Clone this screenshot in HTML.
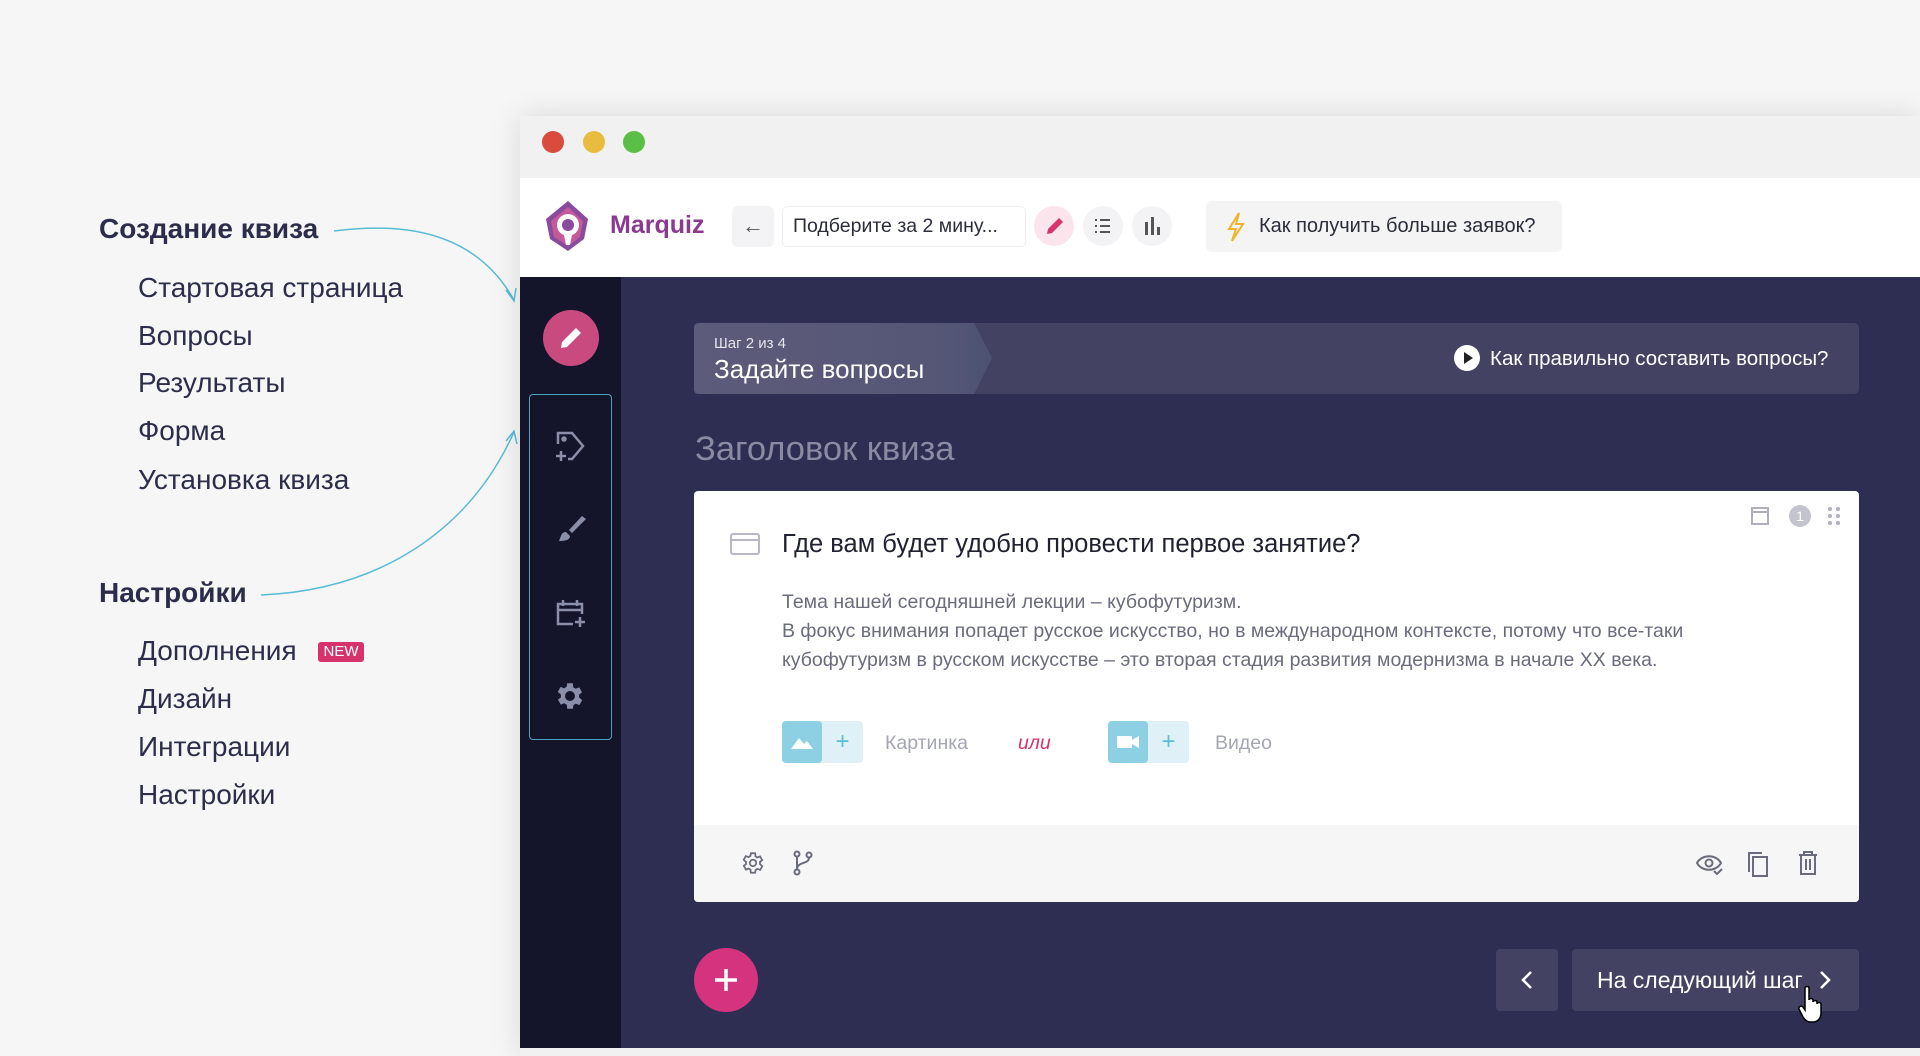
<!DOCTYPE html>
<html><head><meta charset="utf-8"><style>
*{margin:0;padding:0;box-sizing:border-box}
body{width:1920px;height:1048px;background:#f6f6f6;font-family:"Liberation Sans",sans-serif;position:relative;overflow:hidden}
.a{position:absolute}
.lt{font-size:28px;color:#2b2d4a;position:absolute;left:138px;line-height:1}
.lh{font-size:28px;font-weight:bold;color:#2b2d4a;position:absolute;left:99px;line-height:1}
</style></head><body>
<div class="lh" style="top:215px">Создание квиза</div>
<div class="lt" style="top:274px">Стартовая страница</div>
<div class="lt" style="top:322px">Вопросы</div>
<div class="lt" style="top:369px">Результаты</div>
<div class="lt" style="top:417px">Форма</div>
<div class="lt" style="top:466px">Установка квиза</div>
<div class="lh" style="top:579px">Настройки</div>
<div class="lt" style="top:637px">Дополнения</div>
<div class="a" style="left:318px;top:642px;width:46px;height:20px;background:#d6336c;border-radius:3px;color:#fff;font-size:15px;line-height:20px;text-align:center">NEW</div>
<div class="lt" style="top:685px">Дизайн</div>
<div class="lt" style="top:733px">Интеграции</div>
<div class="lt" style="top:781px">Настройки</div>
<svg class="a" style="left:0;top:0" width="520" height="700"><g fill="none" stroke="#5bbcd6" stroke-width="1.5"><path d="M334 231 C420 220 480 240 514 300"/><path d="M506 290 L514 301 L516 288"/><path d="M261 595 C380 590 470 530 514 432"/><path d="M506 441 L514 431 L517 444"/></g></svg>

<div class="a" style="left:520px;top:116px;width:1400px;height:940px;background:#f1f1f1;box-shadow:0 0 30px rgba(0,0,0,.12)"></div>
<div class="a" style="left:542px;top:131px;width:22px;height:22px;border-radius:50%;background:#d94b3d"></div>
<div class="a" style="left:583px;top:131px;width:22px;height:22px;border-radius:50%;background:#e9bc40"></div>
<div class="a" style="left:623px;top:131px;width:22px;height:22px;border-radius:50%;background:#5cbf45"></div>
<div class="a" style="left:520px;top:178px;width:1400px;height:99px;background:#fff"></div>
<svg class="a" style="left:542px;top:199px" width="52" height="54" viewBox="0 0 52 54"><path d="M26 2 L46 20 L42 40 L26 52 L8 40 L4 20Z" fill="#8a4a9e"/><path d="M26 8 L41 22 L38 38 L26 47 L12 38 L9 22Z" fill="#c45a9a"/><circle cx="26" cy="26" r="11" fill="#fff"/><circle cx="26" cy="26" r="6" fill="#8a4a9e"/><path d="M22 36 L30 36 L28 46 L24 46Z" fill="#fff"/></svg>
<div class="a" style="left:610px;top:211px;font-size:25px;font-weight:bold;color:#8c3a8f">Marquiz</div>
<div class="a" style="left:732px;top:206px;width:42px;height:41px;background:#f3f3f5;border-radius:6px;color:#555;font-size:22px;text-align:center;line-height:40px">←</div>
<div class="a" style="left:782px;top:206px;width:244px;height:41px;border:1px solid #eee;border-radius:5px;font-size:19.5px;color:#2b2d3a;line-height:39px;padding-left:10px">Подберите за 2 мину...</div>
<div class="a" style="left:1034px;top:206px;width:40px;height:40px;border-radius:50%;background:#fbe4ec"><svg width="40" height="40"><path d="M13 28 L14 23 L25 12 L29 16 L18 27Z" fill="#d6336c"/></svg></div>
<div class="a" style="left:1083px;top:206px;width:40px;height:40px;border-radius:50%;background:#f3f3f5"><svg width="40" height="40" stroke="#555" stroke-width="2"><path d="M17 14h10M17 20h10M17 26h10M12 14h2M12 20h2M12 26h2"/></svg></div>
<div class="a" style="left:1132px;top:206px;width:40px;height:40px;border-radius:50%;background:#f3f3f5"><svg width="40" height="40" fill="#555"><rect x="13" y="16" width="3" height="13"/><rect x="19" y="11" width="3" height="18"/><rect x="25" y="21" width="3" height="8"/></svg></div>
<div class="a" style="left:1206px;top:201px;width:356px;height:51px;background:#f4f4f5;border-radius:6px"></div>
<svg class="a" style="left:1226px;top:212px" width="20" height="30"><path d="M13 1 L3 17 L10 17 L6 29 L17 12 L10 12Z" fill="none" stroke="#f0b429" stroke-width="2"/></svg>
<div class="a" style="left:1259px;top:215px;font-size:20px;color:#2b2d3a">Как получить больше заявок?</div>

<div class="a" style="left:520px;top:277px;width:1400px;height:771px;background:#2e2d52"></div>
<div class="a" style="left:520px;top:277px;width:101px;height:771px;background:#14152a"></div>
<div class="a" style="left:543px;top:310px;width:56px;height:56px;border-radius:50%;background:#c94a7f"><svg width="56" height="56"><path d="M18 38 L19 32 L33 18 L38 23 L24 37Z" fill="#fff"/></svg></div>
<div class="a" style="left:529px;top:394px;width:83px;height:346px;border:1.5px solid #4aa3c0;border-radius:4px"></div>
<svg class="a" style="left:553px;top:429px" width="36" height="36" fill="none" stroke="#8a8ea8" stroke-width="2.5"><path d="M5 15 V4 H19 L30 17 L19 30 H15"/><path d="M8 22v10M3 27h10"/><circle cx="11" cy="10" r="1.5"/></svg>
<svg class="a" style="left:553px;top:513px" width="36" height="36" fill="#8a8ea8"><path d="M29 3 L33 6 L19 20 L16 17Z"/><path d="M13 19 C8 19 8 24 6 28 C12 28 17 27 17 23Z"/></svg>
<svg class="a" style="left:553px;top:595px" width="36" height="36" fill="none" stroke="#8a8ea8" stroke-width="2.5"><path d="M20 29 H5 V9 H29 V19"/><path d="M5 15h24M10 5v6M24 5v6M27 22v10M22 27h10"/></svg>
<svg class="a" style="left:553px;top:679px" width="34" height="34" viewBox="0 0 24 24" fill="#8a8ea8"><path d="M19.4 13a7.5 7.5 0 000-2l2.1-1.6-2-3.5-2.5 1a7 7 0 00-1.7-1L15 3h-4l-.4 2.6a7 7 0 00-1.7 1l-2.5-1-2 3.5L6.6 11a7.5 7.5 0 000 2l-2.1 1.6 2 3.5 2.5-1a7 7 0 001.7 1L11 21h4l.4-2.6a7 7 0 001.7-1l2.5 1 2-3.5zM13 15.5a3.5 3.5 0 110-7 3.5 3.5 0 010 7z" transform="translate(-1 0)"/></svg>

<div class="a" style="left:694px;top:323px;width:1165px;height:71px;background:#434263;border-radius:5px"></div>
<svg class="a" style="left:694px;top:323px" width="300" height="71"><defs><linearGradient id="g" x1="0" x2="1"><stop offset="0" stop-color="#5d5b7a"/><stop offset=".85" stop-color="#555676"/><stop offset="1" stop-color="#4c5272"/></linearGradient></defs><path d="M5 0 H280 L298 35 L280 71 H5 Q0 71 0 66 V5 Q0 0 5 0Z" fill="url(#g)"/></svg>
<div class="a" style="left:714px;top:335px;font-size:15px;color:#e5e5ee">Шаг 2 из 4</div>
<div class="a" style="left:714px;top:354px;font-size:26px;color:#fff">Задайте вопросы</div>
<div class="a" style="left:1454px;top:345px;width:26px;height:26px;border-radius:50%;background:#fff"><svg width="26" height="26"><path d="M10 7 L19 13 L10 19Z" fill="#222"/></svg></div>
<div class="a" style="left:1490px;top:347px;font-size:20.5px;color:#fff">Как правильно составить вопросы?</div>
<div class="a" style="left:695px;top:430px;font-size:34.5px;color:#8a8aa3">Заголовок квиза</div>

<div class="a" style="left:694px;top:491px;width:1165px;height:411px;background:#fff;border-radius:4px;overflow:hidden"><div class="a" style="left:0;top:334px;width:1165px;height:77px;background:#f6f6f7"></div></div>
<svg class="a" style="left:729px;top:532px" width="32" height="24" fill="none" stroke="#b8b8c4" stroke-width="2"><rect x="2" y="2" width="28" height="20" rx="2"/><path d="M2 8h28"/></svg>
<div class="a" style="left:782px;top:530px;font-size:25.5px;color:#1f2030">Где вам будет удобно провести первое занятие?</div>
<div class="a" style="left:782px;top:588px;font-size:19.5px;color:#6a6b7c;line-height:29px">Тема нашей сегодняшней лекции – кубофутуризм.<br>В фокус внимания попадет русское искусство, но в международном контексте, потому что все-таки<br>кубофутуризм в русском искусстве – это вторая стадия развития модернизма в начале XX века.</div>
<div class="a" style="left:782px;top:721px;width:81px;height:42px;background:#dff0f6;border-radius:4px"><div style="width:40px;height:42px;background:#8dd0e3;border-radius:4px"><svg width="40" height="42"><path d="M9 28 L17 17 L22 23 L25 20 L31 28Z" fill="#fff"/></svg></div><div class="a" style="left:40px;top:0;width:41px;line-height:42px;text-align:center;color:#5bbcd6;font-size:24px">+</div></div>
<div class="a" style="left:885px;top:732px;font-size:19.5px;color:#a5a6b3">Картинка</div>
<div class="a" style="left:1018px;top:732px;font-size:19.5px;color:#d6336c;font-style:italic">или</div>
<div class="a" style="left:1108px;top:721px;width:81px;height:42px;background:#dff0f6;border-radius:4px"><div style="width:40px;height:42px;background:#8dd0e3;border-radius:4px"><svg width="40" height="42"><rect x="9" y="15" width="15" height="12" fill="#fff"/><path d="M24 19 L31 15 V27 L24 23Z" fill="#fff"/></svg></div><div class="a" style="left:40px;top:0;width:41px;line-height:42px;text-align:center;color:#5bbcd6;font-size:24px">+</div></div>
<div class="a" style="left:1215px;top:732px;font-size:19.5px;color:#a5a6b3">Видео</div>
<svg class="a" style="left:1750px;top:506px" width="20" height="20" fill="none" stroke="#b0b0bc" stroke-width="2"><rect x="2" y="2" width="16" height="16"/><path d="M2 6h16"/></svg>
<div class="a" style="left:1789px;top:505px;width:22px;height:22px;border-radius:50%;background:#c4c4ce;color:#fff;font-size:14px;text-align:center;line-height:22px">1</div>
<svg class="a" style="left:1826px;top:506px" width="16" height="20" fill="#b0b0bc"><circle cx="4" cy="3" r="2"/><circle cx="12" cy="3" r="2"/><circle cx="4" cy="10" r="2"/><circle cx="12" cy="10" r="2"/><circle cx="4" cy="17" r="2"/><circle cx="12" cy="17" r="2"/></svg>
<svg class="a" style="left:740px;top:850px" width="26" height="26" viewBox="0 0 24 24" fill="none" stroke="#6a6b7c" stroke-width="1.6"><path d="M19.4 13a7.5 7.5 0 000-2l2.1-1.6-2-3.5-2.5 1a7 7 0 00-1.7-1L15 3h-4l-.4 2.6a7 7 0 00-1.7 1l-2.5-1-2 3.5L6.6 11a7.5 7.5 0 000 2l-2.1 1.6 2 3.5 2.5-1a7 7 0 001.7 1L11 21h4l.4-2.6a7 7 0 001.7-1l2.5 1 2-3.5z" transform="translate(-1 0)"/><circle cx="12" cy="12" r="3"/></svg>
<svg class="a" style="left:790px;top:850px" width="26" height="26" fill="none" stroke="#6a6b7c" stroke-width="2"><circle cx="7" cy="4" r="2.5"/><circle cx="7" cy="22" r="2.5"/><circle cx="19" cy="5" r="2.5"/><path d="M7 7v12M19 8c0 6-12 4-12 11"/></svg>
<svg class="a" style="left:1695px;top:850px" width="28" height="26" fill="none" stroke="#6a6b7c" stroke-width="2"><path d="M2 13 C7 4 21 4 26 13 C21 22 7 22 2 13Z"/><circle cx="14" cy="13" r="3.5"/><path d="M19 21l3 3 5-5"/></svg>
<svg class="a" style="left:1746px;top:850px" width="24" height="28" fill="none" stroke="#6a6b7c" stroke-width="2"><rect x="7" y="7" width="14" height="19"/><path d="M3 22V3h13"/></svg>
<svg class="a" style="left:1796px;top:850px" width="24" height="26" fill="none" stroke="#6a6b7c" stroke-width="2"><path d="M3 5h18M8 5V2h8v3M5 5v19h14V5M10 9v11M14 9v11"/></svg>

<div class="a" style="left:694px;top:948px;width:64px;height:64px;border-radius:50%;background:#d6337f"><svg width="64" height="64" stroke="#fff" stroke-width="3.5"><path d="M32 21v22M21 32h22"/></svg></div>
<div class="a" style="left:1496px;top:949px;width:62px;height:62px;background:#434263;border-radius:4px"><svg width="62" height="62" fill="none" stroke="#fff" stroke-width="2.5"><path d="M35 23 L27 31 L35 39"/></svg></div>
<div class="a" style="left:1572px;top:949px;width:287px;height:62px;background:#434263;border-radius:4px"></div>
<div class="a" style="left:1597px;top:967px;font-size:23px;color:#fff">На следующий шаг</div>
<svg class="a" style="left:1815px;top:965px" width="20" height="30" fill="none" stroke="#fff" stroke-width="2.5"><path d="M6 7 L14 15 L6 23"/></svg>
<svg class="a" style="left:1797px;top:985px" width="30" height="40"><path d="M8 3 C8 1 12 1 12 3 V15 C12 13 16 13 16 15 V17 C16 15 20 15 20 17 V19 C20 17 24 17 24 19 V28 C24 33 21 37 16 37 H13 C10 37 8 35 6 32 L2 24 C1 22 4 20 6 22 L8 25Z" fill="#fff" stroke="#000" stroke-width="1.5"/></svg>
</body></html>
